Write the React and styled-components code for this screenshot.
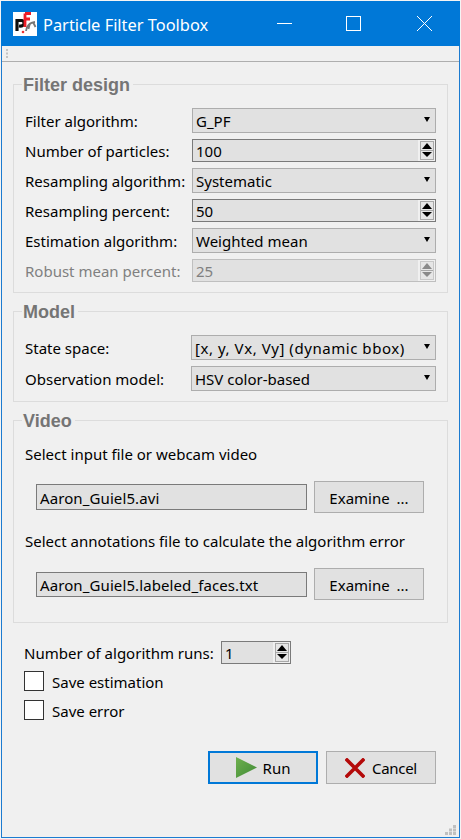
import React from 'react';
import styled, { createGlobalStyle } from 'styled-components';

const Global = createGlobalStyle`
  html, body { margin: 0; padding: 0; background: #f4f4f4; }
  * { box-sizing: border-box; }
`;
const FONT = `"Noto Sans", "Open Sans", sans-serif`;

const Win = styled.div`
  width: 459px; height: 837px; margin: 1px 0 0 1px;
  border: 1px solid #1c7bd0; border-top: 0;
  background: #f0f0f0; display: flex; flex-direction: column;
  font-family: ${FONT}; font-size: 15px; color: #000; position: relative;
`;
const TitleBar = styled.div`
  height: 45px; background: #0078d7; color: #fff; display: flex; align-items: center;
  flex: none; margin: 0 -1px; padding-left: 12px;
`;
const TitleText = styled.span`
  font-size: 16.4px; margin-left: 6px; flex: 1; padding-top: 1px;
`;
const WinControls = styled.div`
  display: grid; grid-template-columns: 67px 71px 71px; height: 45px;
`;
const WinBtn = styled.div`
  display: flex; align-items: center; justify-content: center;
  svg { display: block; }
`;
const ToolStrip = styled.div`
  height: 16px; flex: none; border-bottom: 1px solid #aeaeae; padding: 3px 0 0 4px; background: #f0f0f0;
`;
const Content = styled.div`
  flex: 1; padding: 22px 11px 0 11px; display: flex; flex-direction: column;
`;
const Group = styled.section`
  border: 1px solid #dcdcdc; height: ${p => p.$h}px; margin-bottom: ${p => p.$mb}px; flex: none;
  padding: ${p => p.$pt}px 11px 0 11px;
`;
const Legend = styled.h2`
  margin: 0; font: bold 18px "Liberation Sans", sans-serif; color: #757575; background: #f0f0f0;
  width: fit-content; padding: 0 3px 0 1px; line-height: 18px; position: absolute; transform: translate(-3px, ${p => p.$y}px);
`;
const FormGrid = styled.div`
  display: grid; grid-template-columns: ${p => p.$col}px 1fr; align-items: center;
  grid-auto-rows: ${p => p.$row}px;
`;
const Txt = styled.span`
  display: block; line-height: 20px; padding-top: 1px; white-space: nowrap;
  letter-spacing: ${p => p.$ls || 0}px; word-spacing: ${p => p.$ws || 0}px;
`;
const Label = styled.label`
  color: ${p => p.$disabled ? '#808080' : '#000'}; white-space: nowrap; line-height: 20px; display: block; padding-top: 1px;
  width: ${p => p.$w ? p.$w + 'px' : 'auto'};
`;
const Combo = styled.div`
  height: 25px; background: #e1e1e1; border: 1px solid #adadad; display: flex; align-items: center;
  padding: 0 5px 0 3px; justify-content: space-between;
`;
const Caret = styled.i`
  width: 0; height: 0; border: 3.5px solid transparent; border-top: 5px solid #000; border-bottom: 0; margin-top: -2px;
`;
const Spin = styled.div`
  height: 23px; background: #e1e1e1; border: 1px solid ${p => p.$disabled ? '#bfbfbf' : '#7a7a7a'};
  display: flex; align-items: center; justify-content: space-between;
  color: ${p => p.$disabled ? '#808080' : '#000'}; padding-left: 3px; width: ${p => p.$w ? p.$w + 'px' : 'auto'};
`;
const SpinBtns = styled.div`
  width: 17px; height: 21px; background: #f0f0f0; display: flex; align-items: center; justify-content: flex-end; padding-right: 1px; flex: none;
  svg { display: block; }
`;
const Para = styled.div`
  line-height: 20px; white-space: nowrap; height: 20px; margin-top: ${p => p.$mt || 0}px;
`;
const FileRow = styled.div`
  display: flex; align-items: center; gap: 7px; margin: ${p => p.$mt}px 0 0 11px; height: 32px;
`;
const FileInput = styled.div`
  width: 271px; height: ${p => p.$h}px; background: #e1e1e1; border: 1px solid #7a7a7a; padding-left: 3px;
  display: flex; align-items: center;
`;
const Btn = styled.div`
  width: 110px; height: ${p => p.$h}px; background: #e1e1e1; border: ${p => p.$def ? '2px solid #0078d7' : '1px solid #adadad'};
  display: flex; align-items: center; justify-content: center; gap: ${p => p.$gap || 5}px;
  svg { display: block; }
`;
const RunsRow = styled.div`
  display: flex; align-items: center; height: 23px; margin: 18px 0 0 11px;
`;
const CheckRow = styled.div`
  display: flex; align-items: center; height: 20px; margin: ${p => p.$mt}px 0 0 11px; gap: 8px;
`;
const Check = styled.span`
  width: 20px; height: 20px; background: #fff; border: 1px solid #333; display: block;
`;
const Actions = styled.div`
  display: flex; justify-content: flex-end; gap: 8px; margin: 31px 12px 0 0;
`;
const Grip = styled.svg`
  position: absolute; right: 3px; bottom: 2px; display: block;
`;

const SpinArrows = ({ color = '#000' }) => (
  <svg width="14" height="19" viewBox="0 0 14 19">
    <rect x=".5" y=".5" width="13" height="18" fill="#e6e6e6" stroke={color === '#000' ? '#a8a8a8' : '#c8c8c8'} />
    <line x1="1" y1="9.5" x2="13" y2="9.5" stroke="#a8a8a8" />
    <path d="M7 2 L12 8 H2 Z" fill={color} />
    <path d="M2 11 H12 L7 16 Z" fill={color} />
  </svg>
);
const Logo = () => (
  <svg width="24" height="24" viewBox="0 0 24 24">
    <defs>
      <filter id="soft" x="-10%" y="-10%" width="120%" height="120%">
        <feGaussianBlur stdDeviation="0.45" />
      </filter>
    </defs>
    <rect width="24" height="24" fill="#fff" />
    <g filter="url(#soft)" fill="none">
      <path d="M13 19 Q14 11 22 10 M17 11 L15.5 17 M20 10 L22.5 15" stroke="#777" strokeWidth="1.8" />
      <path d="M4 19 V8.5 H9 Q11.5 9 11 12 Q10 14.5 6 14" stroke="#111" strokeWidth="3.2" />
      <path d="M12 1.5 H18 M12 1.5 V15 M12 7 H17" stroke="#ee1c25" strokeWidth="2.8" />
      <circle cx="10" cy="20" r="1.3" fill="#e33" />
    </g>
  </svg>
);

const Row = ({ label, children, disabled }) => (
  <>
    <Label $disabled={disabled}>{label}</Label>
    {children}
  </>
);
const ComboBox = ({ children, ls }) => <Combo><Txt $ls={ls}>{children}</Txt><Caret /></Combo>;
const SpinBox = ({ children, disabled, w }) => (
  <Spin $disabled={disabled} $w={w}>
    <Txt>{children}</Txt>
    <SpinBtns><SpinArrows color={disabled ? '#8a8a8a' : '#000'} /></SpinBtns>
  </Spin>
);

export default function App() {
  return (
    <>
      <Global />
      <Win>
        <TitleBar>
          <Logo />
          <TitleText>Particle Filter Toolbox</TitleText>
          <WinControls>
            <WinBtn>
              <svg width="15" height="15" viewBox="0 0 15 15"><line x1="0" y1="7.5" x2="15" y2="7.5" stroke="#fff" /></svg>
            </WinBtn>
            <WinBtn>
              <svg width="15" height="15" viewBox="0 0 15 15"><rect x=".5" y=".5" width="14" height="14" fill="none" stroke="#fff" /></svg>
            </WinBtn>
            <WinBtn>
              <svg width="15" height="15" viewBox="0 0 15 15"><path d="M0 0 L15 15 M15 0 L0 15" stroke="#fff" /></svg>
            </WinBtn>
          </WinControls>
        </TitleBar>
        <ToolStrip>
          <svg width="3" height="9" viewBox="0 0 3 9" style={{ display: 'block' }}>
            <path d="M0 0h2v2H0zM0 3.5h2v2H0zM0 7h2v2H0z" fill="#c4c4c4" />
          </svg>
        </ToolStrip>
        <Content>
          <Group $h={209} $mb={18} $pt={20}>
            <Legend $y={-29}>Filter design</Legend>
            <FormGrid $col={167} $row={30}>
              <Row label="Filter algorithm:"><ComboBox>G_PF</ComboBox></Row>
              <Row label="Number of particles:"><SpinBox>100</SpinBox></Row>
              <Row label="Resampling algorithm:"><ComboBox>Systematic</ComboBox></Row>
              <Row label="Resampling percent:"><SpinBox>50</SpinBox></Row>
              <Row label="Estimation algorithm:"><ComboBox>Weighted mean</ComboBox></Row>
              <Row label="Robust mean percent:" disabled><SpinBox disabled>25</SpinBox></Row>
            </FormGrid>
          </Group>
          <Group $h={91} $mb={18} $pt={20}>
            <Legend $y={-29}>Model</Legend>
            <FormGrid $col={166} $row={31}>
              <Row label="State space:"><ComboBox ls={0.55}>[x, y, Vx, Vy] (dynamic bbox)</ComboBox></Row>
              <Row label="Observation model:"><ComboBox>HSV color-based</ComboBox></Row>
            </FormGrid>
          </Group>
          <Group $h={203} $mb={0} $pt={23}>
            <Legend $y={-32}>Video</Legend>
            <Para>Select input file or webcam video</Para>
            <FileRow $mt={17}>
              <FileInput $h={26}><Txt $ls={0.1}>Aaron_Guiel5.avi</Txt></FileInput>
              <Btn $h={32}><Txt $ws={3}>Examine ...</Txt></Btn>
            </FileRow>
            <Para $mt={18}>Select annotations file to calculate the algorithm error</Para>
            <FileRow $mt={17}>
              <FileInput $h={25}><Txt $ls={0.1}>Aaron_Guiel5.labeled_faces.txt</Txt></FileInput>
              <Btn $h={32}><Txt $ws={3}>Examine ...</Txt></Btn>
            </FileRow>
          </Group>
          <RunsRow>
            <Label $w={197}>Number of algorithm runs:</Label>
            <SpinBox w={70}>1</SpinBox>
          </RunsRow>
          <CheckRow $mt={7}><Check /><Txt>Save estimation</Txt></CheckRow>
          <CheckRow $mt={9}><Check /><Txt>Save error</Txt></CheckRow>
          <Actions>
            <Btn $h={33} $def $gap={6}>
              <svg width="21" height="21" viewBox="0 0 21 21">
                <defs>
                  <linearGradient id="g" x1="0" y1="0" x2="1" y2="1">
                    <stop offset="0" stopColor="#6fb04e" />
                    <stop offset="1" stopColor="#3f8a36" />
                  </linearGradient>
                </defs>
                <path d="M0 0 L21 10.5 L0 21 Z" fill="url(#g)" />
              </svg>
              <Txt>Run</Txt>
            </Btn>
            <Btn $h={33} $gap={7}>
              <svg width="20" height="20" viewBox="0 0 20 20">
                <path d="M2 2 L18 18 M18 2 L2 18" stroke="#b40a0a" strokeWidth="3.6" strokeLinecap="square" />
              </svg>
              <Txt $ls={-0.3}>Cancel</Txt>
            </Btn>
          </Actions>
        </Content>
        <Grip width="11" height="10" viewBox="0 0 11 10">
          <path d="M8 0h3v3H8zM4 3.5h3v3H4zM8 3.5h3v3H8zM0 7h3v3H0zM4 7h3v3H4zM8 7h3v3H8z" fill="#c0c0c0" />
        </Grip>
      </Win>
    </>
  );
}
